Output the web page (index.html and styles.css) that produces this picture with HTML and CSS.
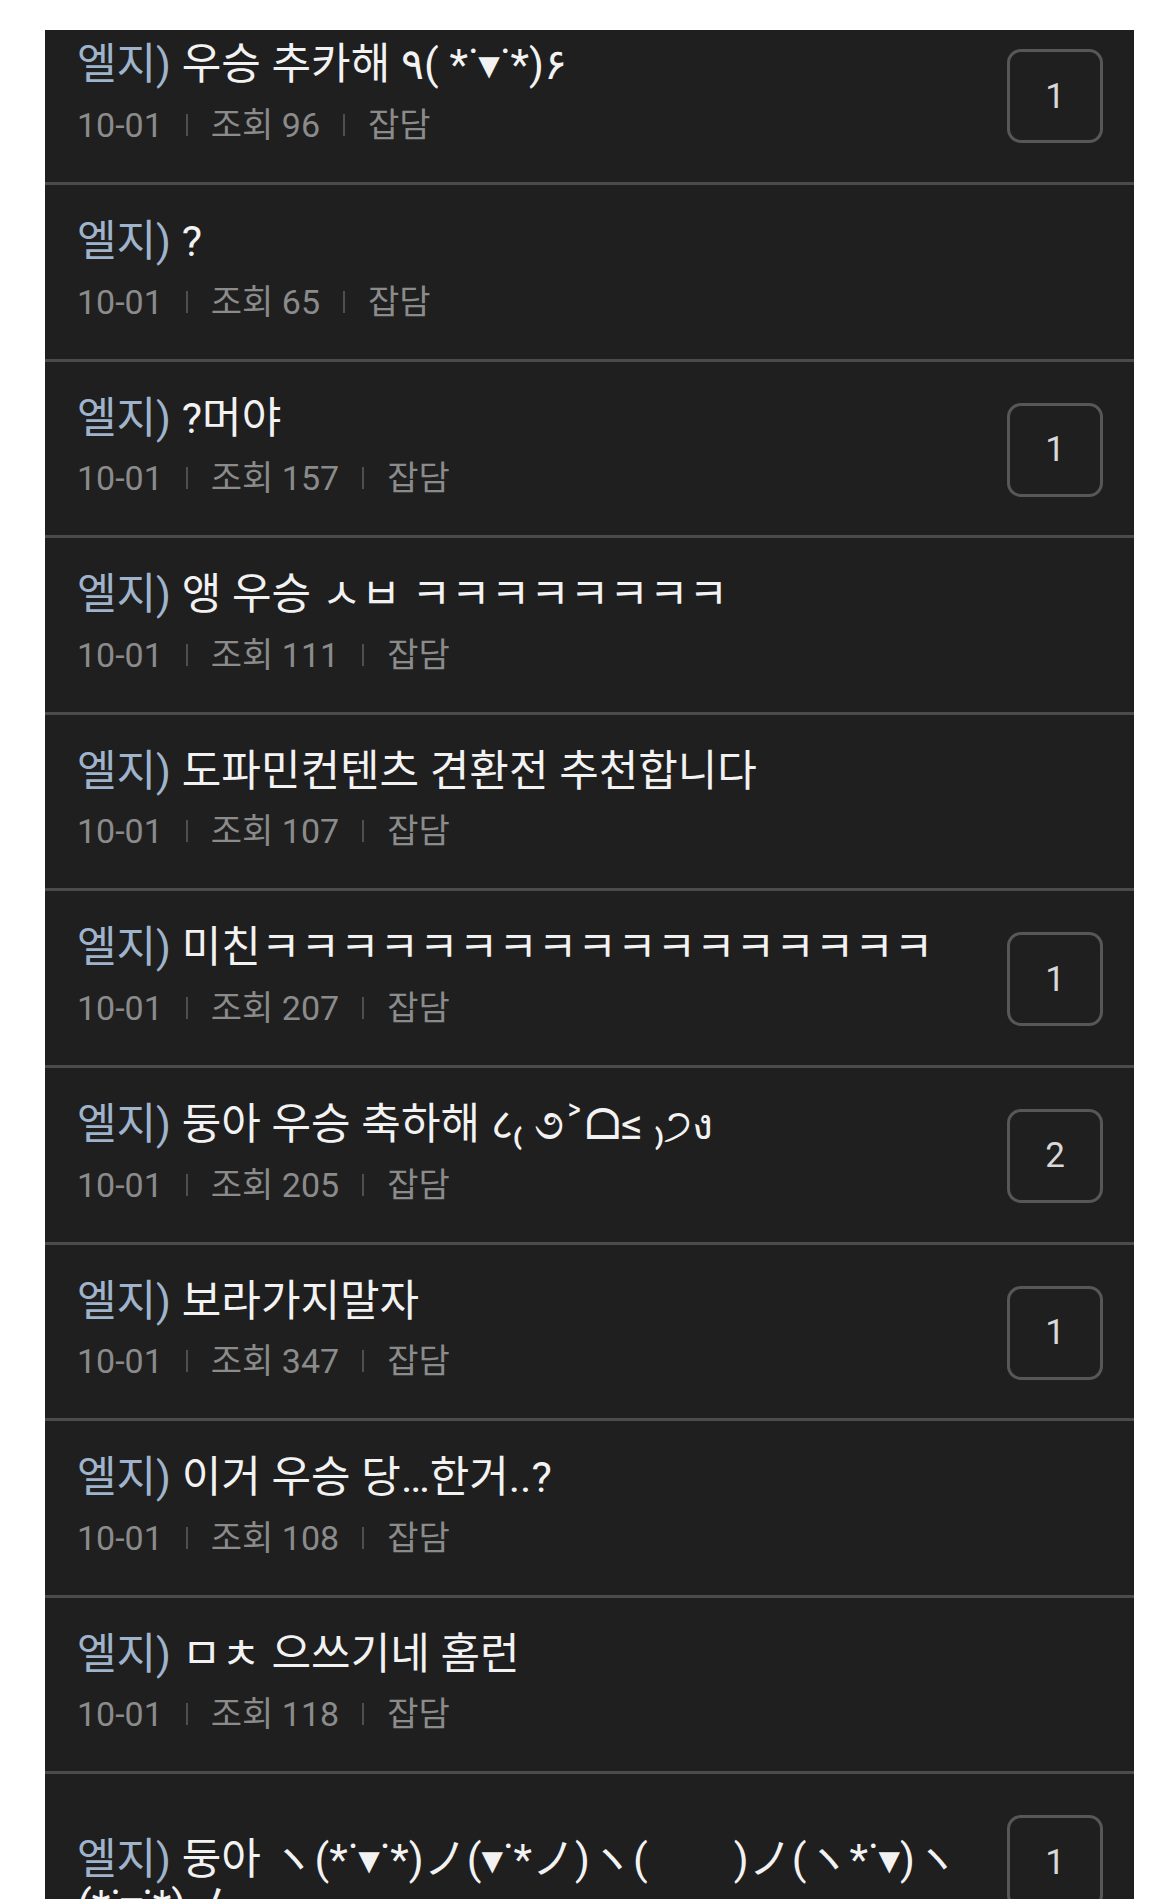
FILE: index.html
```html
<!DOCTYPE html>
<html lang="ko">
<head>
  <meta charset="UTF-8" />
  <title>게시판</title>
  <meta name="viewport" content="width=device-width, initial-scale=1" />
  <link rel="stylesheet" href="styles.css">
</head>
<body>

  <main class="board">
    <ul class="post-list">
      <li class="post">
        <div class="post-body">
          <p class="post-title"><span class="tag">엘지)</span> 우승 추카해 ٩( *˙▾˙*)۶</p>
          <div class="post-meta"><span>10-01</span><i class="bar"></i><span>조회 96</span><i class="bar"></i><span>잡담</span></div>
        </div>
        <span class="reply-count">1</span>
      </li>
      <li class="post">
        <div class="post-body">
          <p class="post-title"><span class="tag">엘지)</span> ?</p>
          <div class="post-meta"><span>10-01</span><i class="bar"></i><span>조회 65</span><i class="bar"></i><span>잡담</span></div>
        </div>
      </li>
      <li class="post">
        <div class="post-body">
          <p class="post-title"><span class="tag">엘지)</span> ?머야</p>
          <div class="post-meta"><span>10-01</span><i class="bar"></i><span>조회 157</span><i class="bar"></i><span>잡담</span></div>
        </div>
        <span class="reply-count">1</span>
      </li>
      <li class="post">
        <div class="post-body">
          <p class="post-title"><span class="tag">엘지)</span> 앵 우승 ㅅㅂ ㅋㅋㅋㅋㅋㅋㅋㅋ</p>
          <div class="post-meta"><span>10-01</span><i class="bar"></i><span>조회 111</span><i class="bar"></i><span>잡담</span></div>
        </div>
      </li>
      <li class="post">
        <div class="post-body">
          <p class="post-title"><span class="tag">엘지)</span> 도파민컨텐츠 견환전 추천합니다</p>
          <div class="post-meta"><span>10-01</span><i class="bar"></i><span>조회 107</span><i class="bar"></i><span>잡담</span></div>
        </div>
      </li>
      <li class="post">
        <div class="post-body">
          <p class="post-title"><span class="tag">엘지)</span> 미친ㅋㅋㅋㅋㅋㅋㅋㅋㅋㅋㅋㅋㅋㅋㅋㅋㅋ</p>
          <div class="post-meta"><span>10-01</span><i class="bar"></i><span>조회 207</span><i class="bar"></i><span>잡담</span></div>
        </div>
        <span class="reply-count">1</span>
      </li>
      <li class="post">
        <div class="post-body">
          <p class="post-title"><span class="tag">엘지)</span> 둥아 우승 축하해 ८₍ ૭˃ᗝ≤ ₎੭ง</p>
          <div class="post-meta"><span>10-01</span><i class="bar"></i><span>조회 205</span><i class="bar"></i><span>잡담</span></div>
        </div>
        <span class="reply-count">2</span>
      </li>
      <li class="post">
        <div class="post-body">
          <p class="post-title"><span class="tag">엘지)</span> 보라가지말자</p>
          <div class="post-meta"><span>10-01</span><i class="bar"></i><span>조회 347</span><i class="bar"></i><span>잡담</span></div>
        </div>
        <span class="reply-count">1</span>
      </li>
      <li class="post">
        <div class="post-body">
          <p class="post-title"><span class="tag">엘지)</span> 이거 우승 당…한거..?</p>
          <div class="post-meta"><span>10-01</span><i class="bar"></i><span>조회 108</span><i class="bar"></i><span>잡담</span></div>
        </div>
      </li>
      <li class="post">
        <div class="post-body">
          <p class="post-title"><span class="tag">엘지)</span> ㅁㅊ 으쓰기네 홈런</p>
          <div class="post-meta"><span>10-01</span><i class="bar"></i><span>조회 118</span><i class="bar"></i><span>잡담</span></div>
        </div>
      </li>
      <li class="post post--long">
        <div class="post-body">
          <p class="post-title"><span class="tag">엘지)</span> 둥아 ヽ(*˙▾˙*)ノ(▾˙*ノ)ヽ(　　)ノ(ヽ*˙▾)ヽ(*˙▾˙*)ノ</p>
          <div class="post-meta"><span>10-01</span><i class="bar"></i><span>조회 96</span><i class="bar"></i><span>잡담</span></div>
        </div>
        <span class="reply-count">1</span>
      </li>
    </ul>
  </main>

</body>
</html>
```

FILE: styles.css
```css
:root {
  --color-bg: #1f1f1f;
  --color-line: #4b4b4b;
  --color-title: #f2f2f2;
  --color-tag: #9fb4cc;
  --color-meta: #8b8b8b;
}

body {
  margin: 0;
  background: #ffffff;
  font-family: Roboto, 'Noto Sans CJK KR', 'DejaVu Sans', sans-serif;
}

.board {
  margin: 30px 15px 0 45px;
  height: 1869px;
  background: var(--color-bg);
  overflow: hidden;
}

/* list is scrolled a little, first row is cut at the top */
.post-list {
  list-style: none;
  margin: -21.6px 0 0;
  padding: 0;
}

.post {
  display: flex;
  align-items: flex-start;
  gap: 36px;
  padding: 33px 31px 35px 32px;
  border-bottom: 3px solid var(--color-line);
}

.post-body {
  flex: 1;
  min-width: 0;
}

/* wrapped titles start lower, next to the middle of the reply box */
.post--long .post-body {
  padding-top: 29px;
}

.post-title {
  margin: 0;
  font-size: 43px;
  line-height: 46px;
  color: var(--color-title);
}

.post-title .tag {
  color: var(--color-tag);
}

.post-meta {
  display: flex;
  align-items: center;
  margin-top: 15.6px;
  font-size: 34px;
  line-height: 44px;
  color: var(--color-meta);
}

.post-meta .bar {
  width: 2px;
  height: 22px;
  margin: 0 23px;
  background: #4f4f4f;
}

.reply-count {
  flex: none;
  box-sizing: border-box;
  width: 96px;
  height: 94px;
  margin-top: 8px;
  display: flex;
  align-items: center;
  justify-content: center;
  border: 3px solid #575757;
  border-radius: 14px;
  font-size: 35px;
  color: #d8d8d8;
}
```
